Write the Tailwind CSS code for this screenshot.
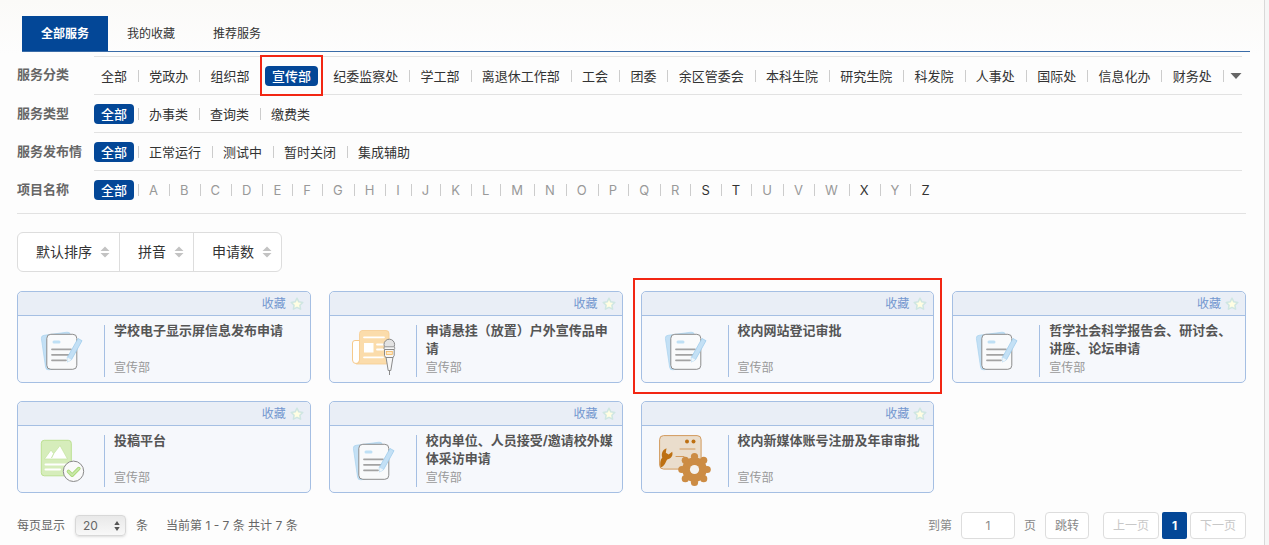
<!doctype html>
<html lang="zh-CN">
  <head>
    <meta charset="UTF-8" />
    <meta name="viewport" content="width=device-width, initial-scale=1.0" />
    <title>全部服务</title>
    <script src="https://cdn.jsdelivr.net/npm/@tailwindcss/browser@4"></script>
  </head>
  <body class="min-h-screen bg-[#f6f6f6] pr-1 font-['Inter','Noto_Sans_CJK_SC',sans-serif] text-[#333]">

    <!-- icons shared by the service cards -->
    <svg class="hidden">
      <symbol id="icon-file" viewBox="0 0 52 52">
        <path d="M9 10.3 32 7.2a3 3 0 0 1 3.4 2.6L39 37.5a3 3 0 0 1-2.6 3.4L14 44.8a3 3 0 0 1-3.4-2.6L6.4 13.7A3 3 0 0 1 9 10.3Z" fill="#c3e0f5" stroke="#a9d3ee" stroke-width=".7" />
        <rect x="11.8" y="9.3" width="30" height="35" rx="4" fill="#f9fafb" stroke="#8c8c8c" />
        <rect x="17.5" y="15.5" width="8" height="3" rx="1.5" fill="#bfe0f5" />
        <path d="M17 24.3h19M17 29.8h18M17 35.3h14" stroke="#a3a3a3" stroke-width="1.8" stroke-linecap="round" />
        <path d="m43 13.5 4 2.2-10.5 19-4 2.3-.2-4.5Z" fill="#c3e0f5" stroke="#9fcdec" stroke-width=".8" stroke-linejoin="round" />
        <path d="m32.3 32.5 4.2 2.2-4 2.5Z" fill="#eef6fb" />
      </symbol>
      <symbol id="icon-news" viewBox="0 0 52 52">
        <path d="M13 15.5H8a2.5 2.5 0 0 0-2.5 2.5v17a3.5 3.5 0 0 0 7 0Z" fill="#fff" stroke="#f6c98a" />
        <path d="M15 5.5h24a3 3 0 0 1 3 3V36a3 3 0 0 1-3 3H9.5a3.5 3.5 0 0 0 3-3.5V8.5a3 3 0 0 1 2.5-3Z" fill="#fbdcab" stroke="#f6cb8f" stroke-width=".8" />
        <path d="M17 12.3h20M30 19.5h7M30 24.5h6M17 32.3h19" stroke="#fff" stroke-width="1.8" stroke-linecap="round" />
        <rect x="17" y="18" width="9.5" height="9.5" fill="#fff" />
        <path d="M39 32h7l-2.2 13.5h-2.6ZM42.5 45v5" fill="#f7f7f7" stroke="#8a8a8a" />
        <circle cx="42.3" cy="19.5" r="5.3" fill="#e3e3e3" stroke="#8a8a8a" />
        <rect x="37" y="21.8" width="10.7" height="2.7" rx="1" fill="#f7f7f7" stroke="#8a8a8a" stroke-width=".9" />
        <path d="M37.5 24.5h9.7v6l-1.2 2h-7.3l-1.2-2Z" fill="#f7f7f7" stroke="#8a8a8a" />
        <rect x="39.3" y="26.5" width="6" height="3" fill="#fdeacb" stroke="#f4b860" stroke-width=".8" />
      </symbol>
      <symbol id="icon-post" viewBox="0 0 52 52">
        <rect x="6.3" y="5.3" width="30" height="35.5" rx="3" fill="#d6edbb" stroke="#bce092" />
        <path d="m9.5 24 6.5-9 2.7 3.7L25 10.5 32.5 24Z" fill="#fff" stroke="#c4e4a0" stroke-width=".7" stroke-linejoin="round" />
        <path d="M18.7 18.7 16.5 23" stroke="#c4e4a0" />
        <path d="M10.5 29.5H32M10.5 34.5H25" stroke="#fff" stroke-width="2" stroke-linecap="round" />
        <circle cx="38.5" cy="36.3" r="10.2" fill="#fafafa" stroke="#8a8a8a" />
        <path d="m33.5 36.5 3.7 3.7 6.6-6.6" fill="none" stroke="#a9d878" stroke-width="3.6" stroke-linecap="round" stroke-linejoin="round" />
        <path d="m33.5 36.5 3.7 3.7 6.6-6.6" fill="none" stroke="#c9e8a8" stroke-width="1.8" stroke-linecap="round" stroke-linejoin="round" />
      </symbol>
      <symbol id="icon-gear" viewBox="0 0 52 52">
        <rect x=".6" y=".6" width="41.5" height="33.5" rx="4" fill="#eaddcc" stroke="#d29a5d" />
        <path d="M1.5 32.5C1 29 1 25 3.3 22.6 2 18.5 3.5 14.8 7.5 13.2L6.8 17.8l2.8 1.6 3.6-2.6c1.2 4-1.2 7-5 7.6C6.5 27 5.5 31.5 1.5 32.5Z" fill="#bd7012" />
        <circle cx="28" cy="6.4" r="2" fill="#bd7012" />
        <circle cx="34.5" cy="6.4" r="2" fill="#bd7012" />
        <path d="M21 14h15M17 21.5h8" stroke="#d29a5d" stroke-linecap="round" />
        <g fill="#cc8c44">
          <circle cx="35.5" cy="34.5" r="12.3" />
          <circle cx="35.5" cy="21.5" r="3.6" />
          <circle cx="44.7" cy="25.3" r="3.6" />
          <circle cx="48.2" cy="34.5" r="3.6" />
          <circle cx="44.7" cy="43.7" r="3.6" />
          <circle cx="35.5" cy="47.5" r="3.6" />
          <circle cx="26.3" cy="43.7" r="3.6" />
          <circle cx="22.8" cy="34.5" r="3.6" />
          <circle cx="26.3" cy="25.3" r="3.6" />
        </g>
        <circle cx="35.5" cy="34.5" r="4.6" fill="#f4f2ef" />
      </symbol>
      <symbol id="icon-star" viewBox="0 0 14 14">
        <path d="m7 1.2 1.8 3.6 4 .6-2.9 2.8.7 4L7 10.3l-3.6 1.9.7-4-2.9-2.8 4-.6Z" fill="#fffee3" stroke="#cfe6e2" stroke-width="1.5" stroke-linejoin="round" />
      </symbol>
      <symbol id="icon-sort" viewBox="0 0 10 12">
        <path d="M5 .5 9.5 5H.5ZM5 11.5 9.5 7H.5Z" fill="#c3c3c3" />
      </symbol>
    </svg>

    <main class="min-h-screen border-r border-[#d9d9d9] bg-linear-to-b from-[#fbfaf8] to-[#fdfdfd] to-10% pt-4 pb-1">

      <nav class="ml-[22px] mr-3.5 flex border-b border-[#3a6ca8] text-xs">
        <a href="#" class="bg-[#034797] px-[19px] leading-[35px] font-bold text-white">全部服务</a>
        <a href="#" class="px-[19px] leading-[35px]">我的收藏</a>
        <a href="#" class="px-[19px] leading-[35px]">推荐服务</a>
      </nav>

      <div class="mr-[18px] ml-[17px]">
        <section id="filters" class="mt-1 border-b border-[#e2e2e2] pr-1 pb-[5px] text-[13px]"></section>

        <div class="mt-[18px] flex h-10 w-fit divide-x divide-[#ddd] rounded-md border border-[#ddd] bg-white text-sm">
          <button type="button" class="flex items-center gap-2 pr-[9px] pl-[18px]">默认排序<svg class="h-3 w-2.5"><use href="#icon-sort" /></svg></button>
          <button type="button" class="flex items-center gap-2 pr-[9px] pl-[18px]">拼音<svg class="h-3 w-2.5"><use href="#icon-sort" /></svg></button>
          <button type="button" class="flex items-center gap-2 pr-[9px] pl-[18px]">申请数<svg class="h-3 w-2.5"><use href="#icon-sort" /></svg></button>
        </div>

        <section id="cards" class="mt-[19px] grid grid-cols-4 gap-[18px]"></section>

        <footer class="mt-[19px] flex items-center justify-between text-xs text-[#666]">
          <div class="flex items-center">
            <label for="page-size">每页显示</label>
            <div class="relative mx-2.5">
              <select id="page-size" class="h-[21px] w-[51px] appearance-none rounded border border-[#d8d8d8] bg-linear-to-b from-[#e9e9e9] to-[#f8f8f8] pl-[7px] shadow-sm">
                <option>20</option>
                <option>50</option>
              </select>
              <svg class="pointer-events-none absolute top-1.5 right-1.5 h-2.5 w-1.5" viewBox="0 0 6 10">
                <path d="M3 0 5.7 4H.3ZM3 10 5.7 6H.3Z" fill="#555" />
              </svg>
            </div>
            <span>条</span>
            <span class="ml-[18px]">当前第 1 - 7 条 共计 7 条</span>
          </div>

          <div class="flex items-center text-[#888]">
            <label for="page-no">到第</label>
            <input id="page-no" type="text" value="1" class="mx-[9px] h-[27px] w-[54px] rounded border border-[#ddd] bg-white text-center" />
            <span>页</span>
            <button type="button" class="ml-[9px] h-[27px] rounded border border-[#ddd] bg-white px-[9px]">跳转</button>
            <button type="button" disabled class="ml-3.5 h-[27px] rounded border border-[#ddd] bg-white px-[9px] text-[#c8c8c8]">上一页</button>
            <button type="button" class="mx-[3px] h-[27px] w-[25px] rounded-xs bg-[#034797] font-bold text-white">1</button>
            <button type="button" disabled class="h-[27px] rounded border border-[#ddd] bg-white px-[9px] text-[#c8c8c8]">下一页</button>
          </div>
        </footer>
      </div>
    </main>

    <script>

      const filters = [
        { label: '服务分类', active: '宣传部', more: true, items: ['全部', '党政办', '组织部', '宣传部', '纪委监察处', '学工部', '离退休工作部', '工会', '团委', '余区管委会', '本科生院', '研究生院', '科发院', '人事处', '国际处', '信息化办', '财务处'] },
        { label: '服务类型', active: '全部', items: ['全部', '办事类', '查询类', '缴费类'] },
        { label: '服务发布情', active: '全部', items: ['全部', '正常运行', '测试中', '暂时关闭', '集成辅助'] },
        { label: '项目名称', active: '全部', items: ['全部', ...'ABCDEFGHIJKLMNOPQRSTUVWXYZ'] },
      ];

      // Only these letters have services behind them
      const usedLetters = ['S', 'T', 'X', 'Z'];

      const cards = [
        { icon: 'icon-file', title: '学校电子显示屏信息发布申请' },
        { icon: 'icon-news', title: '申请悬挂（放置）户外宣传品申请' },
        { icon: 'icon-file', title: '校内网站登记审批', marked: true },
        { icon: 'icon-file', title: '哲学社会科学报告会、研讨会、讲座、论坛申请' },
        { icon: 'icon-post', title: '投稿平台' },
        { icon: 'icon-file', title: '校内单位、人员接受/邀请校外媒体采访申请' },
        { icon: 'icon-gear', title: '校内新媒体账号注册及年审审批' },
      ];

      function itemColor(item, active) {
        if (item === active) return 'bg-[#034797] font-medium text-white';
        if (item.length === 1 && !usedLetters.includes(item)) return 'text-[#999]';
        return 'text-[#333]';
      }

      function filterItem(item, filter, isLast) {
        const mark = item === '宣传部' ? '<span class="pointer-events-none absolute -inset-x-[5px] -top-[11px] -bottom-2.5 z-10 border-2 border-[#f22613]"></span>' : '';
        const line = isLast && !filter.more ? '' : '<span class="ml-1 h-3 w-px bg-[#ccc]"></span>';
        return `
          <li class="flex items-center">
            <a href="#" class="relative rounded px-[7px] leading-5 whitespace-nowrap ${itemColor(item, filter.active)}">${item}${mark}</a>${line}
          </li>`;
      }

      document.getElementById('filters').innerHTML = filters.map((filter, i) => `
        <div class="flex">
          <h3 class="w-[77px] shrink-0 leading-9 font-bold text-[#666]">${filter.label}</h3>
          <div class="flex flex-1 items-center border-[#e2e2e2] ${i === 0 ? 'border-t' : ''} ${i < 3 ? 'border-b' : ''}">
            <ul class="flex h-[37px] items-center ${filter.more ? 'flex-1 justify-between' : 'gap-[3px]'}">
              ${filter.items.map((item, n) => filterItem(item, filter, n === filter.items.length - 1)).join('')}
            </ul>
            ${filter.more ? '<button type="button" aria-label="更多" class="ml-1.5"><svg class="h-1.5 w-3" viewBox="0 0 12 6"><path d="M.5 0h11L6 6Z" fill="#666" /></svg></button>' : ''}
          </div>
        </div>`).join('');

      document.getElementById('cards').innerHTML = cards.map((card) => `
        <article class="relative rounded-[5px] border border-[#a5bfe3] bg-[#f6f8fc]">
          <div class="flex h-6 items-center justify-end rounded-t-[5px] border-b border-[#a5bfe3] bg-[#e9eef6] pr-1.5">
            <button type="button" class="flex items-center gap-1 text-xs text-[#7397cf]">收藏<svg class="size-3.5"><use href="#icon-star" /></svg></button>
          </div>
          <div class="flex pt-[9px] pr-2 pb-[5px] pl-[17px]">
            <svg class="mr-[17px] size-[52px] shrink-0"><use href="#${card.icon}" /></svg>
            <div class="border-l border-[#a5bfe3] pl-[9px]">
              <div class="-my-1">
                <h4 class="min-h-9 text-[13px] leading-[18px] font-bold text-[#555]">${card.title}</h4>
                <p class="text-xs leading-[22px] text-[#999]">宣传部</p>
              </div>
            </div>
          </div>
          ${card.marked ? '<span class="pointer-events-none absolute -inset-x-[9px] -top-3.5 -bottom-3 border-2 border-[#f22613]"></span>' : ''}
        </article>`).join('');

    </script>

  </body>
</html>
